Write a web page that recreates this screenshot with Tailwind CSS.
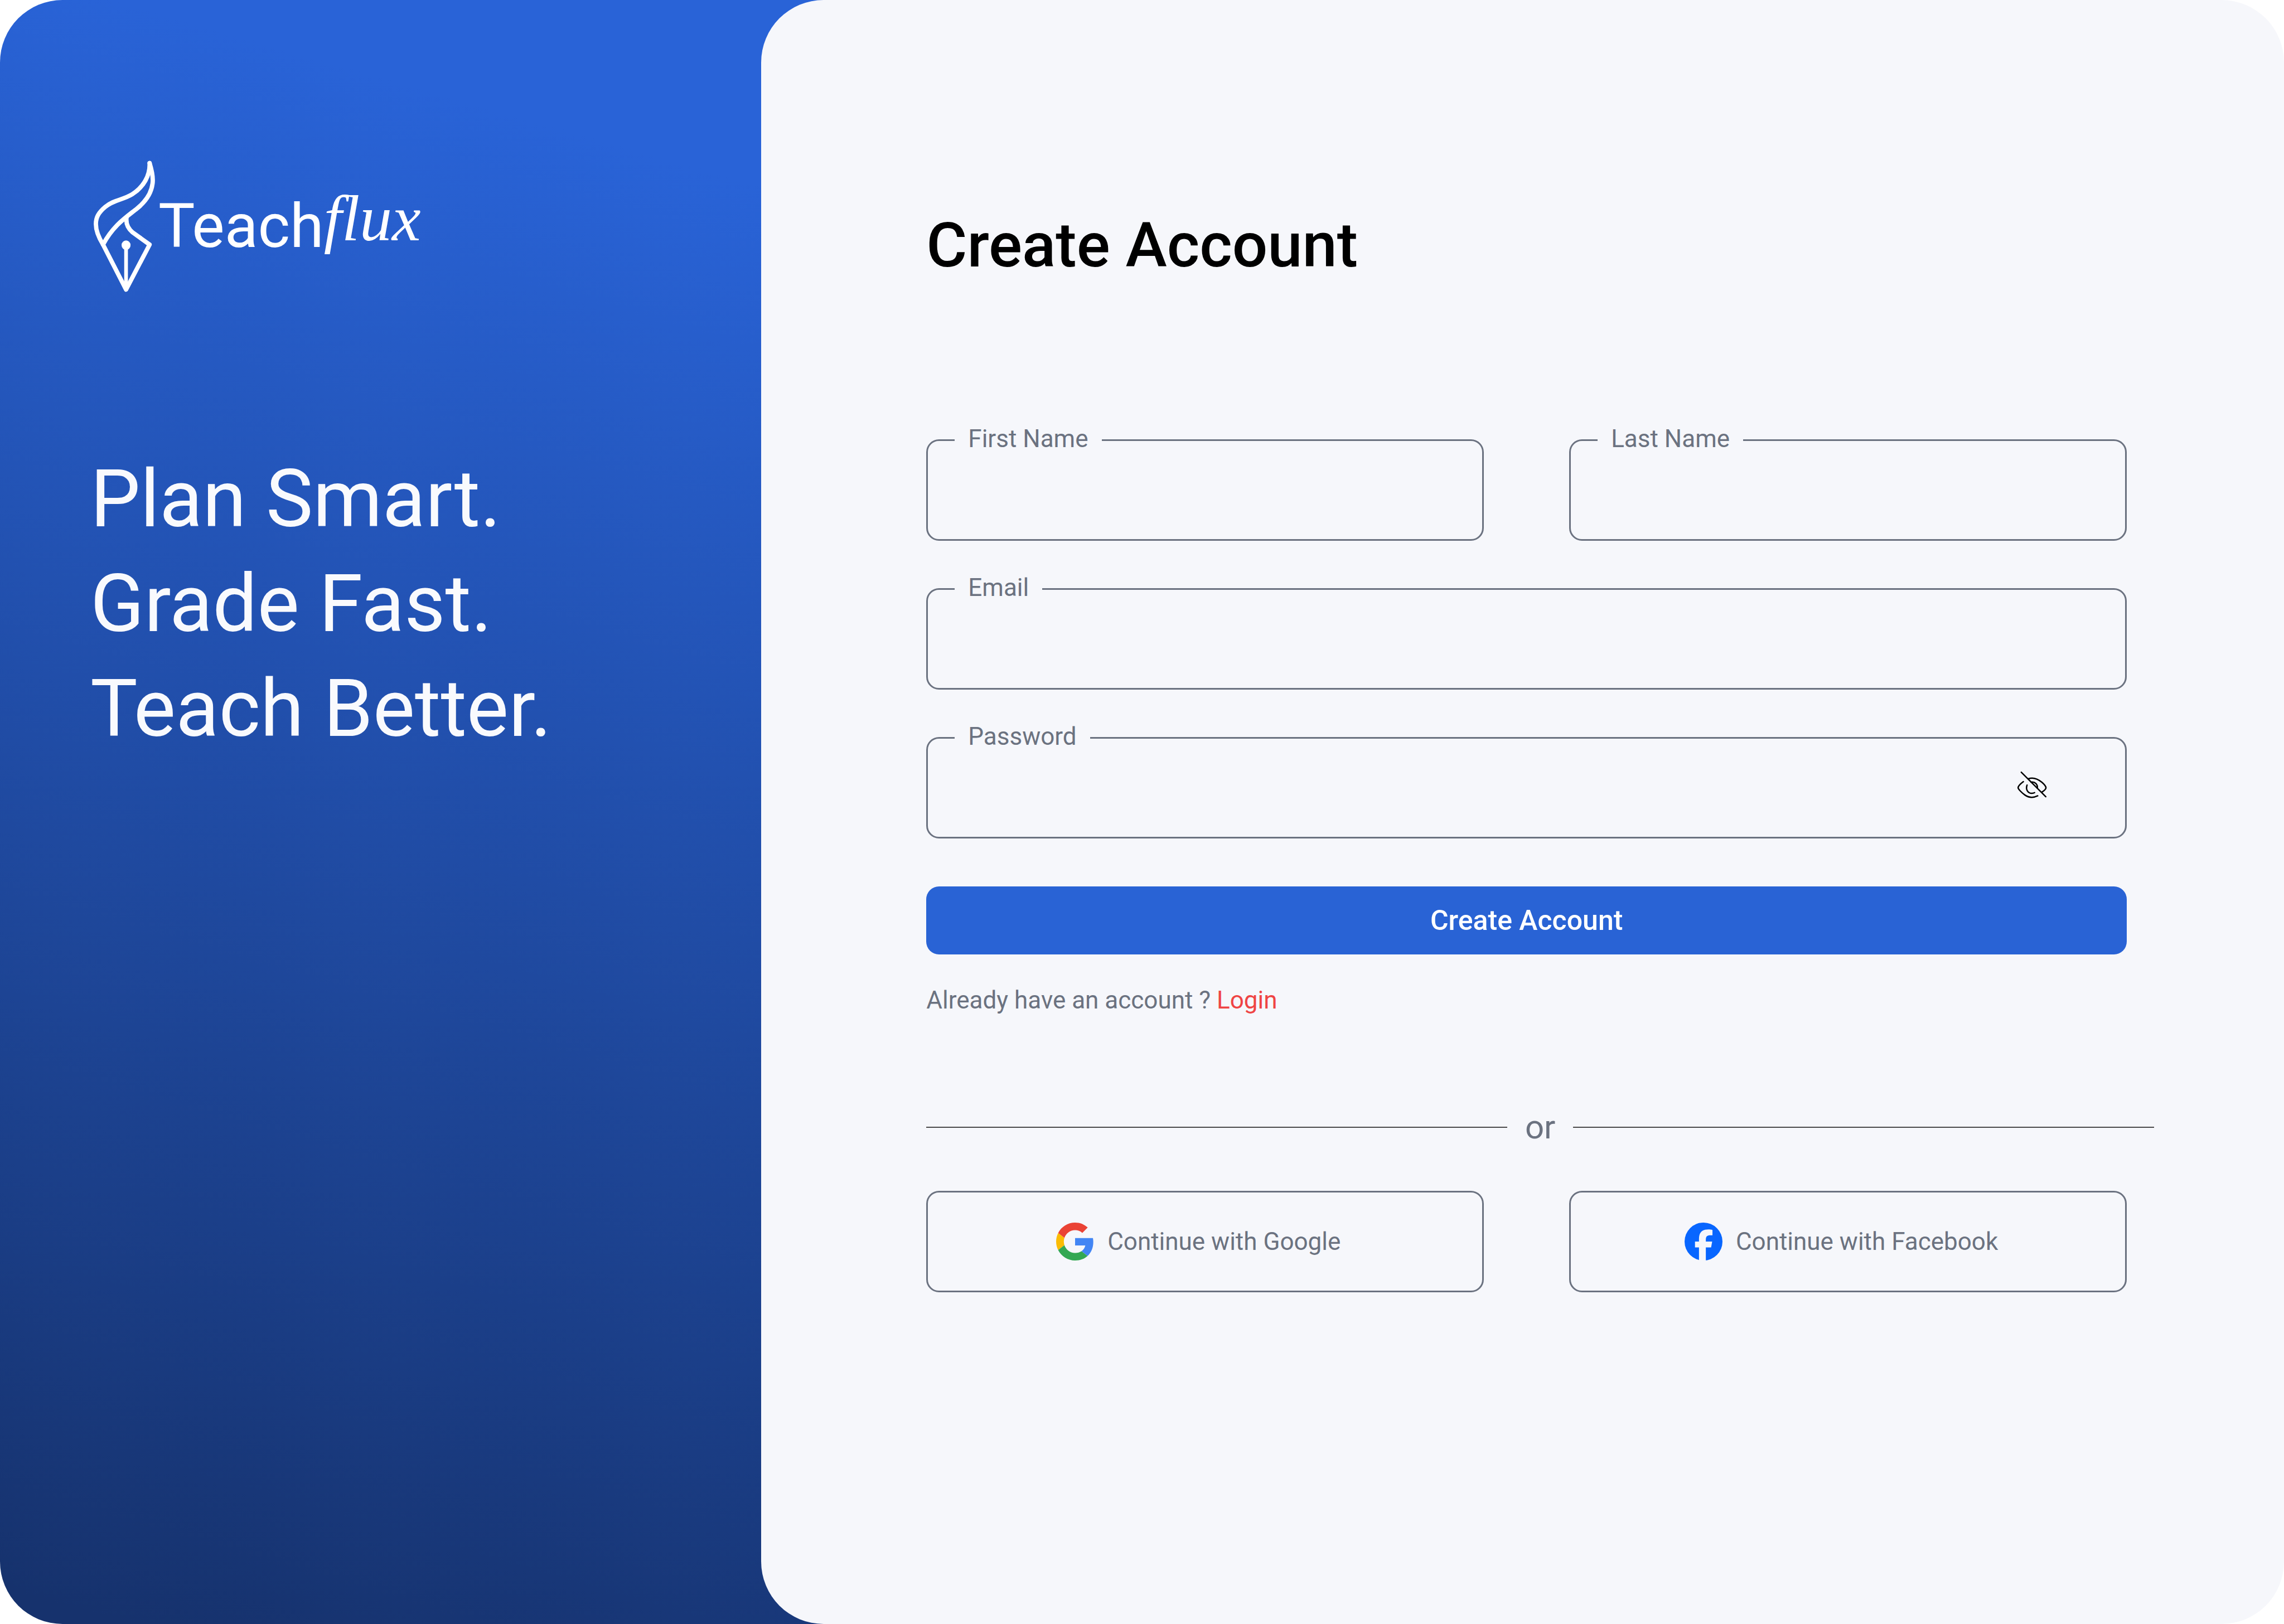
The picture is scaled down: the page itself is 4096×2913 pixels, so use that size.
<!DOCTYPE html>
<html lang="en">
<head>
<meta charset="utf-8">
<meta name="viewport" content="width=device-width, initial-scale=1">
<title>Teachflux – Create Account</title>
<script src="https://cdn.jsdelivr.net/npm/@tailwindcss/browser@4"></script>
</head>
<body class="bg-white">
<div class="flex min-h-screen w-full font-[Roboto,sans-serif]">

  <!-- Brand panel; runs under the rounded edge of the form panel -->
  <aside class="w-[calc(33.3333%+120px)] shrink-0 rounded-l-[112px] bg-[linear-gradient(196deg,#2963d7_11%,#16326d_98%)] pt-[284px] pl-[162px] text-white">
    <div class="flex items-start gap-[10px]">
      <svg class="h-[243px] w-[112px] shrink-0 overflow-visible" viewBox="30 20 118 256" fill="none" stroke="currentColor" stroke-width="8.200" stroke-linejoin="round" stroke-linecap="round" aria-hidden="true">
        <path d="M142 29C143 52 131 74 109 88C91 99 75 98 58 112C45 123 40.500 132 40.500 144C40.500 158 46 170 54 183L97.500 268L142 183L110 160C99 151 97 141 98.500 131"/>
        <path d="M142 29C147 45 149 58 147.500 68C145 88 133 103 118 115C98 131 73 147 54 183"/>
        <ellipse cx="97.500" cy="184" rx="8.500" ry="9" fill="currentColor" stroke="none"/>
        <path d="M97.500 188V258" stroke-width="7"/>
        <path d="M93 256h9l-4.500 10z" fill="currentColor" stroke-width="2"/>
      </svg>
      <p class="mt-[50px] text-[110px] leading-[120px] whitespace-nowrap">Teach<span class="align-[12px] font-['Liberation_Serif',serif] text-[116px] leading-none italic">flux</span></p>
    </div>
    <p class="mt-[275px] text-[142px] leading-[188px] text-[#f9fafd]">Plan Smart.<br>Grade Fast.<br>Teach Better.</p>
  </aside>

  <main class="-ml-[120px] flex-1 rounded-[112px] bg-[#f6f7fb] pt-[372px] pr-[282px] pb-[200px] pl-[296px] text-[44px] leading-[48px] text-[#6b7280]">
    <h1 class="text-[112px] leading-[136px] font-medium text-black">Create Account</h1>

    <form class="mt-[280px]">
      <div class="grid grid-cols-2 gap-x-[153px] gap-y-[85px]">
        <div class="relative">
          <input id="first-name" type="text" class="block h-[182px] w-full rounded-[23px] border-3 border-[#6b7280] px-[72px] text-black">
          <label for="first-name" class="absolute -top-[25px] left-[51px] bg-[#f6f7fb] px-6">First Name</label>
        </div>
        <div class="relative">
          <input id="last-name" type="text" class="block h-[182px] w-full rounded-[23px] border-3 border-[#6b7280] px-[72px] text-black">
          <label for="last-name" class="absolute -top-[25px] left-[51px] bg-[#f6f7fb] px-6">Last Name</label>
        </div>
        <div class="relative col-span-2">
          <input id="email" type="email" class="block h-[182px] w-full rounded-[23px] border-3 border-[#6b7280] px-[72px] text-black">
          <label for="email" class="absolute -top-[25px] left-[51px] bg-[#f6f7fb] px-6">Email</label>
        </div>
        <div class="relative col-span-2">
          <input id="password" type="password" class="block h-[182px] w-full rounded-[23px] border-3 border-[#6b7280] pr-[240px] pl-[72px] text-black">
          <label for="password" class="absolute -top-[25px] left-[51px] bg-[#f6f7fb] px-6">Password</label>
          <button type="button" aria-label="Show password" class="absolute inset-y-0 right-[137px] flex items-center text-black">
            <svg class="size-[66px]" viewBox="324 228 210 210" fill="none" stroke="currentColor" stroke-width="8" stroke-linecap="round" stroke-linejoin="round">
              <path d="M368 244L508 384"/>
              <path d="M380 298C360 313 350 327 350 333C350 340 370 361 388 374C412 391 438 391 462 379"/>
              <path d="M408 282C437 271 464 284 486 302C502 316 509 327 509 333C509 339 498 350 486 358"/>
              <path d="M401 318C391 345 408 365 428 365Q438 365 444 361"/>
              <path d="M424 301C447 297 462 315 460 335"/>
            </svg>
          </button>
        </div>
      </div>
      <button type="submit" class="mt-[86px] block h-[122px] w-full rounded-[23px] bg-[#2963d5] text-[50px] font-medium text-white">Create Account</button>
    </form>

    <p class="mt-[58px]">Already have an account ? <a href="#" class="text-[#ef4444]">Login</a></p>

    <div class="mt-[172px] -mr-[49px] flex items-center gap-8">
      <div class="h-[2px] flex-1 bg-[#4a4a4a]"></div>
      <span class="text-[60px] leading-[64px]">or</span>
      <div class="h-[2px] flex-1 bg-[#4a4a4a]"></div>
    </div>

    <div class="mt-[82px] grid grid-cols-2 gap-x-[153px]">
      <button type="button" class="flex h-[182px] items-center justify-center gap-6 rounded-[23px] border-3 border-[#6b7280] pr-6">
        <svg class="size-[68px]" viewBox="2 2 44 44" aria-hidden="true">
          <path fill="#EA4335" d="M24 10.700c3.220 0 6.120 1.110 8.400 3.280l6.260-6.260C34.850 4.170 29.910 2 24 2 15.400 2 7.960 6.930 4.340 14.120l7.290 5.660C13.350 14.570 18.230 10.700 24 10.700z"/>
          <path fill="#FBBC05" d="M11.630 28.220A13.200 13.200 0 0 1 10.940 24c0-1.470.25-2.890.69-4.220l-7.290-5.660A21.900 21.900 0 0 0 2 24c0 3.550.85 6.910 2.340 9.880z"/>
          <path fill="#34A853" d="M24 46c5.940 0 10.920-1.970 14.560-5.330l-7.110-5.520c-1.970 1.320-4.490 2.100-7.450 2.100-5.770 0-10.650-3.890-12.370-9.030l-7.290 5.660C7.960 41.070 15.400 46 24 46z"/>
          <path fill="#4285F4" d="M45.120 24.500c0-1.560-.14-3.060-.4-4.500H24v8.510h11.840c-.51 2.750-2.060 5.080-4.390 6.640l7.110 5.520c4.160-3.830 6.560-9.470 6.560-16.170z"/>
        </svg>
        Continue with Google
      </button>
      <button type="button" class="flex h-[182px] items-center justify-center gap-6 rounded-[23px] border-3 border-[#6b7280] pr-6">
        <svg class="size-[68px]" viewBox="0 0 36 36" aria-hidden="true">
          <circle cx="18" cy="18" r="18" fill="#0866ff"/>
          <path fill="#f6f7fb" d="M13.700 36V23.600H9.900V18h3.800v-2.400c0-6.200 2.800-9.100 8.900-9.100 1.200 0 3.100.2 3.900.5v5.100c-.4 0-1.200-.1-2.100-.1-3 0-4.200 1.100-4.200 4.100V18h6l-1 5.600h-5V36z"/>
        </svg>
        Continue with Facebook
      </button>
    </div>
  </main>
</div>
</body>
</html>
